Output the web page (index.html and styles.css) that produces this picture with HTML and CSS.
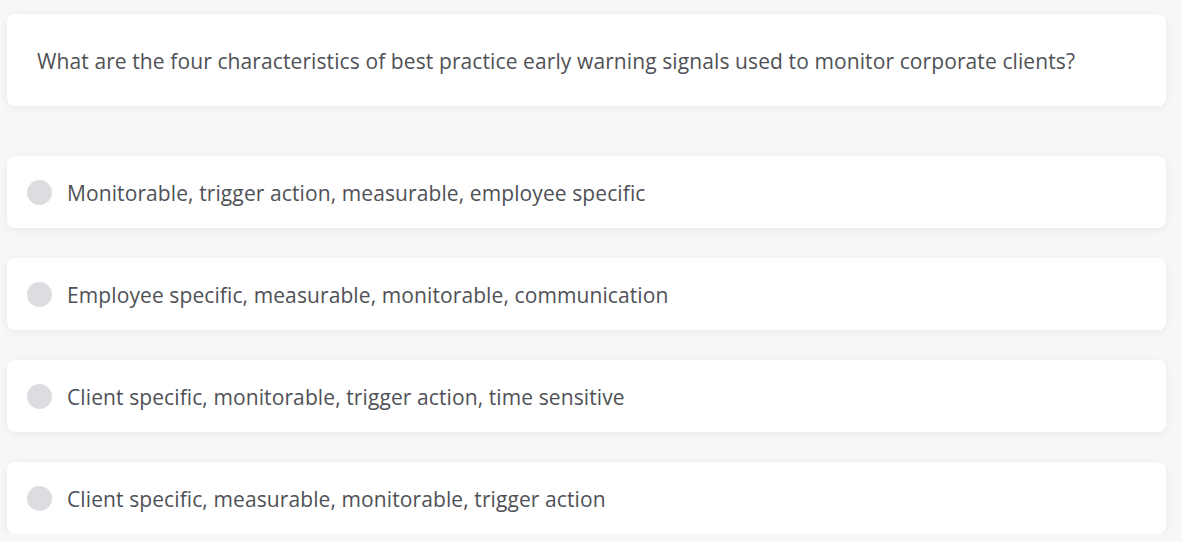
FILE: index.html
```html
<!DOCTYPE html>
<html>
<head>
<meta charset="utf-8">
<link rel="stylesheet" href="styles.css">
</head>
<body>
<div class="page">
  <div class="question"><span class="label">What are the four characteristics of best practice early warning signals used to monitor corporate clients?</span></div>
  <div class="options">
    <div class="option"><span class="radio"></span><span class="label">Monitorable, trigger action, measurable, employee specific</span></div>
    <div class="option"><span class="radio"></span><span class="label">Employee specific, measurable, monitorable, communication</span></div>
    <div class="option"><span class="radio"></span><span class="label">Client specific, monitorable, trigger action, time sensitive</span></div>
    <div class="option"><span class="radio"></span><span class="label">Client specific, measurable, monitorable, trigger action</span></div>
  </div>
</div>
</body>
</html>
```
FILE: styles.css
```css
html, body {
  margin: 0;
  padding: 0;
  background: #f6f7f9;
}
body {
  font-family: "Open Sans", "Noto Sans", sans-serif;
  color: #4f5156;
}
.page {
  padding: 14px 16px 0 7px;
}
.question {
  background: #fff;
  border-radius: 8px;
  box-shadow: 0 2px 8px rgba(0,0,0,0.06);
  height: 92px;
  box-sizing: border-box;
  padding: 0 30px;
  display: flex;
  align-items: center;
  font-size: 21px;
  letter-spacing: 0.1px;
}
.options {
  margin-top: 50px;
  display: flex;
  flex-direction: column;
  gap: 30px;
}
.option {
  background: #fff;
  border-radius: 8px;
  box-shadow: 0 2px 8px rgba(0,0,0,0.06);
  height: 72px;
  box-sizing: border-box;
  padding: 0 20px;
  display: flex;
  align-items: center;
  gap: 15px;
  font-size: 21px;
  letter-spacing: 0.1px;
}
.label {
  padding-top: 2px;
}
.radio {
  width: 25px;
  height: 25px;
  border-radius: 50%;
  background: #dcdde0;
  flex: none;
}
```
